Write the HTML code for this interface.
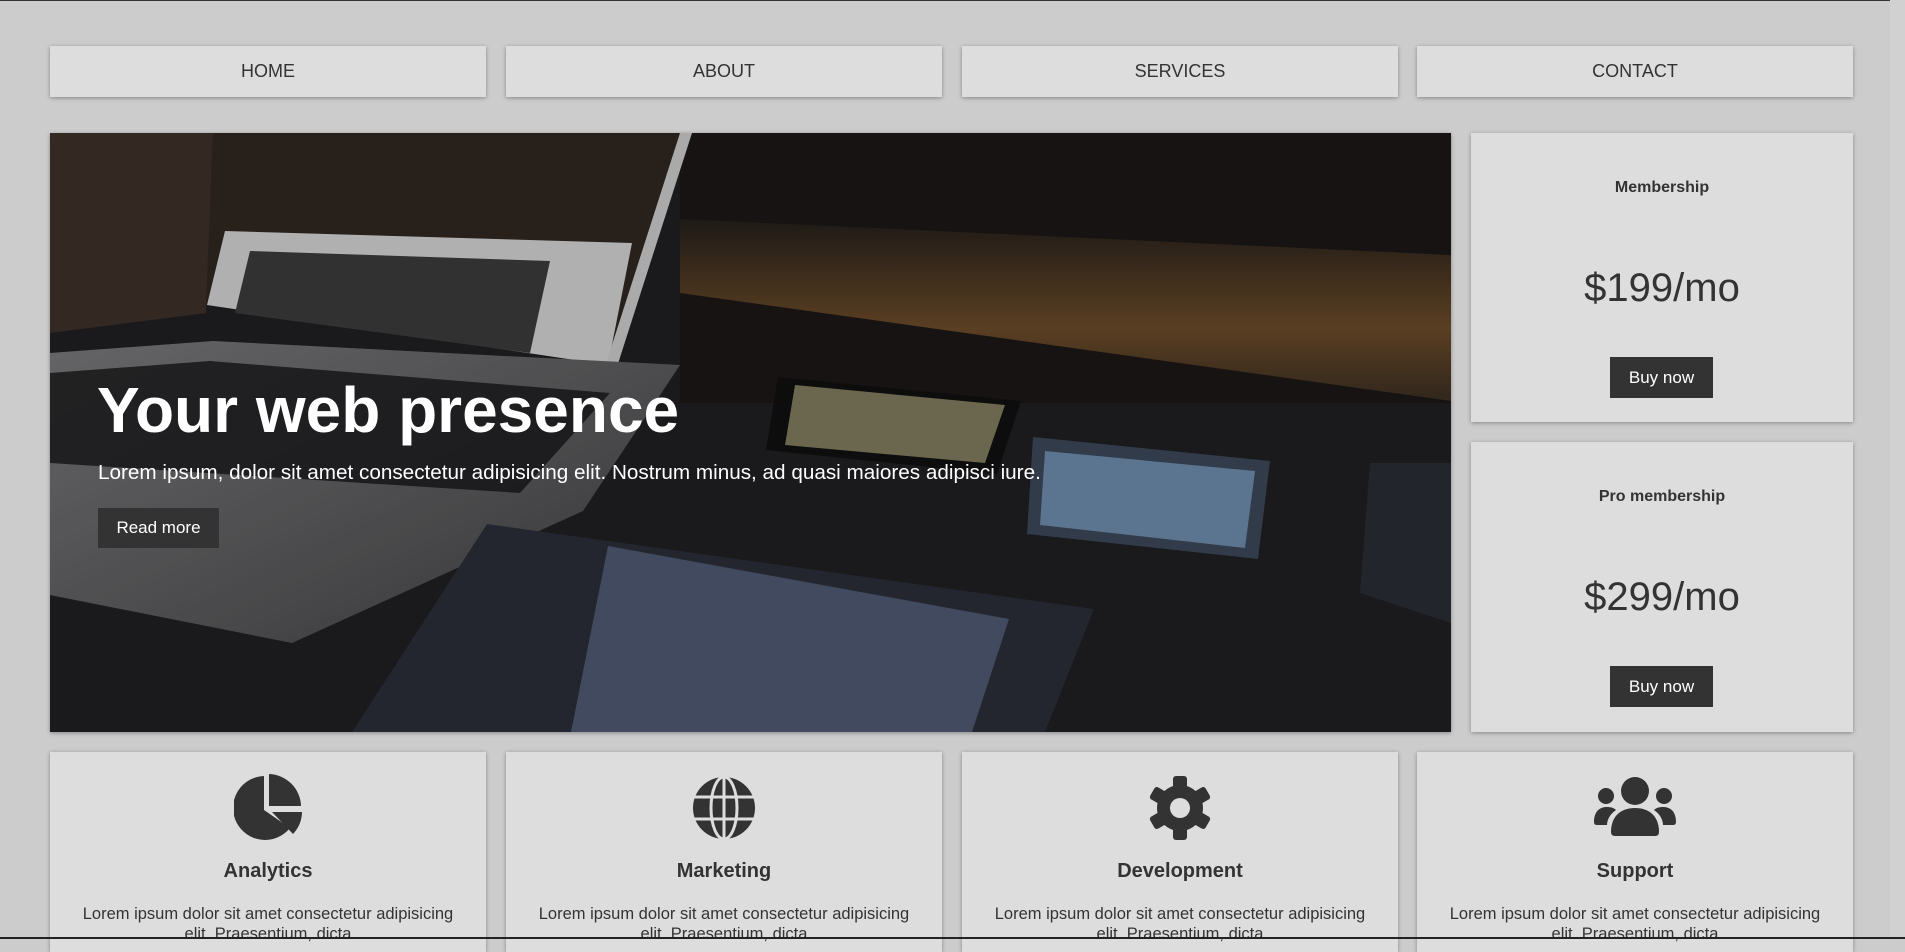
<!DOCTYPE html>
<html><head><meta charset="utf-8">
<style>
*{margin:0;padding:0;box-sizing:border-box}
html,body{width:1905px;height:939px;overflow:hidden;background:#cccccc;font-family:"Liberation Sans",Arial,sans-serif;color:#333}
.topline{position:absolute;left:0;top:0;width:1905px;height:1px;background:#333}
.botline{position:absolute;left:0;top:937px;width:1905px;height:2px;background:#222}
.sb{position:absolute;left:1890px;top:0;width:15px;height:939px;background:#d1d1d1}
.box{position:absolute;background:#dddddd;box-shadow:0 1px 4px rgba(0,0,0,.35)}
.nav{top:46px;height:51px;width:436px;display:flex;align-items:center;justify-content:center;font-size:18px;color:#333}
.hero{position:absolute;left:50px;top:133px;width:1401px;height:599px;overflow:hidden;background:#1f1e20;box-shadow:0 1px 4px rgba(0,0,0,.35)}
.hero h1{position:absolute;left:47px;top:240px;font-size:64px;font-weight:bold;color:#fff;white-space:nowrap}
.hero p{position:absolute;left:48px;top:328px;font-size:20.7px;color:#fff;white-space:nowrap}
.btn{position:absolute;background:#333;color:#fff;display:flex;align-items:center;justify-content:center;font-size:17px}
.price{left:1471px;width:382px;text-align:center}
.price .t{position:absolute;left:0;right:0;font-size:16px;font-weight:bold;color:#333}
.price .p{position:absolute;left:0;right:0;font-size:40px;color:#333}
.feat{top:752px;width:436px;height:200px;text-align:center}
.feat svg{position:absolute;left:184px;top:22px}
.feat h3{position:absolute;left:0;right:0;top:108px;font-size:20px;font-weight:bold;color:#333}
.feat p{position:absolute;left:30px;right:30px;top:152px;font-size:16.5px;line-height:20px;color:#333}
</style></head><body>
<div class="topline"></div>
<div class="sb"></div>
<div class="box nav" style="left:50px">HOME</div>
<div class="box nav" style="left:506px">ABOUT</div>
<div class="box nav" style="left:962px">SERVICES</div>
<div class="box nav" style="left:1417px">CONTACT</div>

<div class="hero">
<svg width="1401" height="599" style="position:absolute;left:0;top:0">
<defs>
<linearGradient id="warm" x1="0" y1="0" x2="0" y2="1"><stop offset="0" stop-color="#241f1b"/><stop offset=".6" stop-color="#6a4a28"/><stop offset="1" stop-color="#3a2e22"/></linearGradient>
<linearGradient id="kb" x1="0" y1="0" x2="1" y2="1"><stop offset="0" stop-color="#77777a"/><stop offset="1" stop-color="#404042"/></linearGradient>
</defs>
<rect width="1401" height="599" fill="#1f1e21"/>
<rect x="630" width="771" height="270" fill="#1a1716"/>
<polygon points="630,86 1401,122 1401,268 630,160" fill="url(#warm)"/>
<polygon points="0,0 163,0 156,180 0,200" fill="#3e3028"/>
<polygon points="163,0 637,0 558,232 156,172" fill="#2f2620"/>
<polygon points="175,98 582,110 558,232 157,172" fill="#cfcfcf"/>
<polygon points="200,118 500,128 480,220 185,180" fill="#3a3a3a"/>
<polygon points="630,0 642,0 565,240 553,240" fill="#c8c8c8"/>
<polygon points="0,220 163,208 630,232 533,378 242,510 0,462" fill="url(#kb)"/>
<polygon points="0,240 160,228 560,260 470,360 0,330" fill="#1a1a1c" opacity=".85"/>
<polygon points="437,391 1044,476 995,599 302,599" fill="#2a2d38"/>
<polygon points="558,413 959,486 922,599 521,599" fill="#5a6682" opacity=".75"/>
<polygon points="728,244 971,268 947,341 716,317" fill="#101010"/>
<polygon points="745,252 955,272 935,330 735,312" fill="#7d7a5c"/>
<polygon points="983,304 1220,328 1208,426 977,401" fill="#3a4658"/>
<polygon points="995,318 1205,338 1195,415 990,392" fill="#6c89aa"/>
<polygon points="1320,330 1401,330 1401,490 1310,460" fill="#2a2c34"/>
<rect width="1401" height="599" fill="#000" opacity=".15"/>
</svg>
<h1>Your web presence</h1>
<p>Lorem ipsum, dolor sit amet consectetur adipisicing elit. Nostrum minus, ad quasi maiores adipisci iure.</p>
<div class="btn" style="left:48px;top:375px;width:121px;height:40px">Read more</div>
</div>

<div class="box price" style="top:133px;height:289px">
<div class="t" style="top:46px">Membership</div>
<div class="p" style="top:133px">$199/mo</div>
<div class="btn" style="left:139px;top:224px;width:103px;height:41px">Buy now</div>
</div>
<div class="box price" style="top:442px;height:290px">
<div class="t" style="top:46px">Pro membership</div>
<div class="p" style="top:133px">$299/mo</div>
<div class="btn" style="left:139px;top:224px;width:103px;height:41px">Buy now</div>
</div>

<div class="box feat" style="left:50px">
<svg width="68" height="68" viewBox="0 0 68 68"><path d="M30 2 A32 32 0 1 0 56 54 L30 36 Z" fill="#333"/><path d="M35 0 A33 33 0 0 1 67 32 L35 32 Z" fill="#333"/><path d="M38 38 L68 38 A33 33 0 0 1 59 60 Z" fill="#333"/></svg>
<h3>Analytics</h3>
<p>Lorem ipsum dolor sit amet consectetur adipisicing elit. Praesentium, dicta</p>
</div>
<div class="box feat" style="left:506px">
<svg width="68" height="68" viewBox="0 0 68 68"><circle cx="34" cy="34" r="31" fill="#333"/><g stroke="#ddd" stroke-width="3" fill="none"><ellipse cx="34" cy="34" rx="13" ry="31"/><line x1="34" y1="2" x2="34" y2="66"/><line x1="2" y1="23" x2="66" y2="23"/><line x1="2" y1="45" x2="66" y2="45"/></g></svg>
<h3>Marketing</h3>
<p>Lorem ipsum dolor sit amet consectetur adipisicing elit. Praesentium, dicta</p>
</div>
<div class="box feat" style="left:962px">
<svg width="68" height="68" viewBox="0 0 68 68"><g fill="#333" transform="translate(34 34)"><circle r="23"/><g id="t"><rect x="-7" y="-32" width="14" height="14" rx="3"/></g><use href="#t" transform="rotate(60)"/><use href="#t" transform="rotate(120)"/><use href="#t" transform="rotate(180)"/><use href="#t" transform="rotate(240)"/><use href="#t" transform="rotate(300)"/></g><circle cx="34" cy="34" r="10" fill="#ddd"/></svg>
<h3>Development</h3>
<p>Lorem ipsum dolor sit amet consectetur adipisicing elit. Praesentium, dicta</p>
</div>
<div class="box feat" style="left:1417px">
<svg width="84" height="68" viewBox="0 0 84 68" style="left:176px"><g fill="#333"><circle cx="42" cy="17" r="14"/><circle cx="13" cy="22" r="8"/><circle cx="71" cy="22" r="8"/><path d="M18 58 C18 42 28 34 42 34 C56 34 66 42 66 58 Q66 62 62 62 L22 62 Q18 62 18 58Z"/><path d="M1 48 C1 38 6 33 14 33 C18 33 21 34 23 36 C17 40 14 46 14 51 L4 51 Q1 51 1 48Z"/><path d="M83 48 C83 38 78 33 70 33 C66 33 63 34 61 36 C67 40 70 46 70 51 L80 51 Q83 51 83 48Z"/></g></svg>
<h3>Support</h3>
<p>Lorem ipsum dolor sit amet consectetur adipisicing elit. Praesentium, dicta</p>
</div>
<div class="botline"></div>
</body></html>
